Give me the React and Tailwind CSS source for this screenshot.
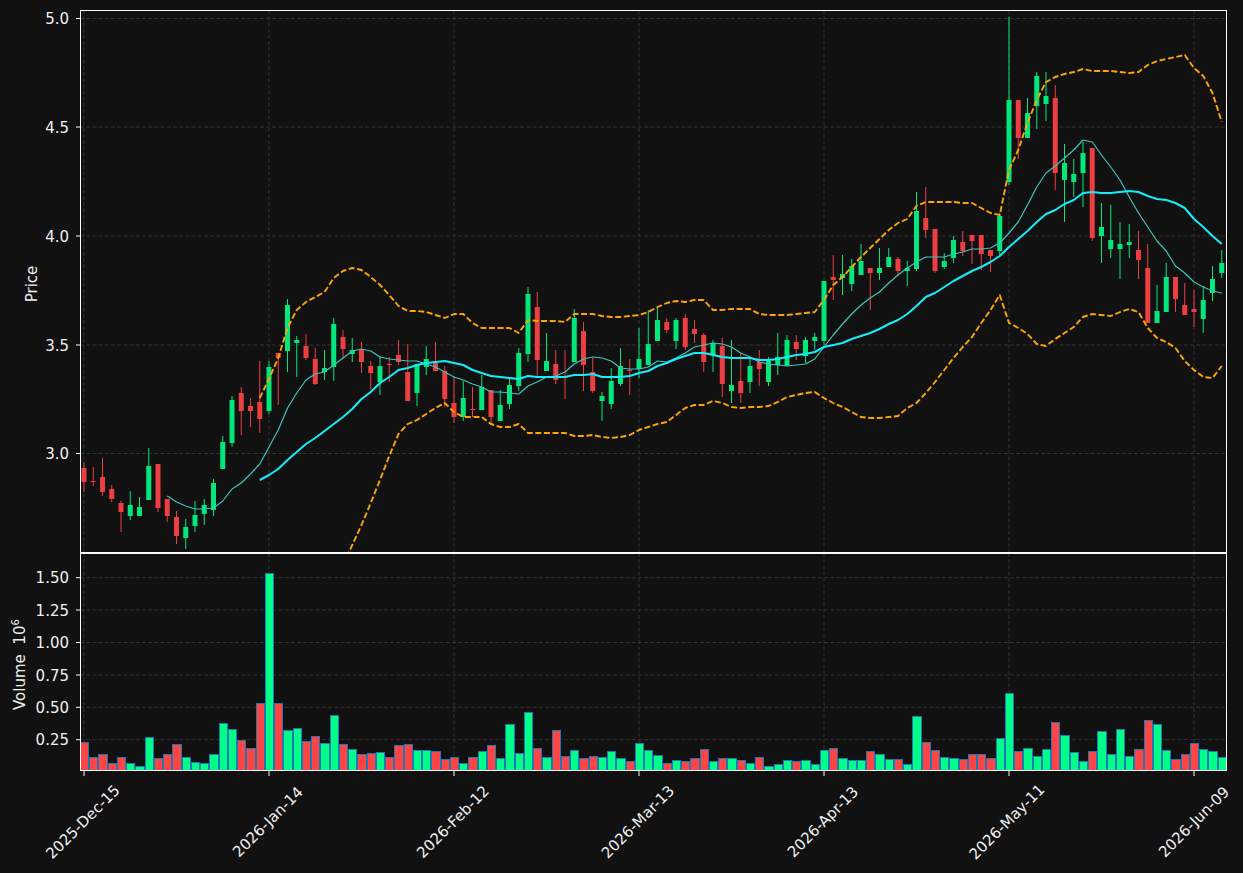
const C = [
[0,462,468,482,492],[0,467,481,482,486],[0,458,477,492,496],[0,485,489,499,502],[0,501,503,512,532],
[1,491,505,516,520],[1,497,507,516,516],[1,448,466,500,500],[0,464,464,508,512],[0,499,499,516,522],
[0,511,517,536,544],[1,519,527,538,549],[1,501,515,526,532],[1,499,505,514,525],[1,479,483,510,516],
[1,436,442,469,469],[1,396,400,443,447],[0,387,393,411,435],[0,398,406,411,427],[0,361,402,419,433],
[1,361,367,411,414],[0,353,353,358,405],[1,299,305,351,372],[1,336,340,343,377],[0,334,346,358,360],
[0,348,359,384,385],[1,350,368,372,380],[1,318,324,367,381],[0,330,337,349,358],[1,338,350,354,362],
[0,342,349,362,373],[0,361,366,373,390],[1,356,366,382,395],[0,357,364,365,382],[0,340,355,362,365],
[0,344,372,401,401],[1,364,364,393,406],[1,346,359,367,375],[0,342,363,371,371],[0,366,371,399,407],
[0,376,403,417,423],[1,381,398,417,421],[0,387,409,410,417],[1,375,387,410,410],[0,390,390,417,423],
[1,390,405,421,421],[1,378,385,404,409],[1,348,353,386,391],[1,287,294,354,362],[0,292,307,360,377],
[1,333,361,371,371],[0,350,364,380,384],[0,350,377,378,399],[1,309,318,362,362],[0,322,331,365,391],
[0,358,372,391,393],[1,392,396,401,421],[1,368,381,404,409],[1,348,366,384,386],[0,359,370,371,395],
[1,328,359,369,378],[1,310,344,365,365],[1,308,320,341,341],[0,318,322,330,333],[1,318,320,341,349],
[0,314,318,347,350],[0,320,329,334,343],[0,333,335,362,372],[1,340,343,355,372],[0,338,346,384,397],
[1,340,385,391,403],[0,353,381,393,403],[1,358,366,382,393],[0,350,362,369,386],[1,357,361,382,386],
[1,333,357,365,375],[1,335,340,366,366],[0,335,342,349,360],[1,337,340,356,363],[1,333,337,341,350],
[1,281,281,341,345],[0,255,277,280,300],[1,255,274,278,295],[1,259,266,284,291],[1,244,261,275,275],
[0,268,268,273,310],[1,248,268,273,280],[1,248,257,267,267],[0,257,259,271,276],[1,261,268,271,286],
[1,192,211,269,271],[0,187,218,230,238],[0,229,229,271,273],[1,253,261,267,269],[1,236,240,258,263],
[0,231,242,251,256],[0,235,235,241,264],[0,235,235,254,270],[0,250,250,256,272],[1,213,216,251,255],
[1,17,100,182,185],[0,100,100,138,159],[1,98,113,138,138],[1,72,76,106,129],[1,72,96,104,121],
[0,85,98,173,190],[1,144,163,180,222],[1,159,174,182,197],[1,142,153,173,207],[0,148,148,238,241],
[1,203,227,236,263],[1,205,240,249,258],[1,222,244,249,279],[1,224,242,245,258],[0,231,250,260,279],
[0,244,268,323,323],[1,285,311,323,323],[1,263,277,312,312],[0,277,277,299,312],[0,283,305,315,315],
[0,290,309,312,327],[1,286,300,319,333],[1,266,279,293,301],[1,250,263,273,278],
];

const V = [742,757,754,763,757,763,766,737,758,754,744,757,762,763,754,723,729,740,748,703,573,703,730,728,741,736,
743,715,744,749,754,753,752,757,745,744,750,750,751,759,757,763,757,751,745,758,724,753,712,748,757,730,756,750,758,756,757,751,758,761,743,
750,755,763,760,761,758,749,761,758,758,760,763,757,766,764,760,761,760,764,750,748,758,760,760,751,754,759,759,764,716,742,750,757,758,
759,754,754,758,738,693,751,748,756,749,722,735,752,761,751,731,754,729,756,749,720,724,750,759,754,743,749,751,757];

const THIN = [496,502,506,509,509,508,501,489,483,474,464,447,430,408,393,380,374,372,365,358,351,349,351,357,359,360,361,361,364,367,372,377,380,384,387,392,392,393,394,386,382,377,376,372,364,359,357,358,361,368,369,369,367,361,362,358,353,347,345,343,344,347,353,357,362,364,365,366,365,364,359,347,335,324,314,305,298,292,283,275,268,262,257,257,257,254,252,249,249,248,243,233,222,205,187,173,166,158,150,140,142,155,167,180,197,213,227,241,251,266,273,282,287,291,293];
const THICK = [480,475,469,460,452,444,438,431,424,417,409,399,392,383,377,370,368,365,363,362,361,363,365,370,373,376,377,378,379,376,377,377,377,377,375,375,374,377,377,377,376,373,371,366,363,359,356,353,353,355,357,358,358,358,360,360,359,357,355,354,352,347,345,343,339,336,333,329,324,320,314,306,297,293,287,281,276,271,267,262,256,247,239,231,222,214,210,204,200,193,192,193,193,192,191,192,196,199,200,203,208,219,227,236,244];
const UPPER = [398,379,358,328,310,302,297,292,278,271,268,270,277,285,295,306,311,311,312,315,318,314,314,323,328,328,328,328,333,320,321,321,321,322,314,314,314,316,317,317,316,315,312,307,303,301,302,300,300,310,310,309,309,309,314,315,315,315,314,313,312,300,285,277,267,257,248,239,230,223,219,206,202,202,202,202,203,203,208,213,215,170,150,123,100,82,77,74,72,69,71,71,71,72,73,72,65,61,59,57,55,68,76,93,122];
const LOWER = [565,545,525,503,480,456,434,424,420,414,408,403,412,417,417,417,424,427,427,424,433,433,433,433,433,436,436,435,437,438,437,435,430,427,424,422,415,408,405,405,401,403,407,408,407,407,406,402,397,395,393,392,398,403,407,412,417,418,418,417,416,408,403,393,382,370,358,347,337,323,310,295,323,328,334,344,346,339,333,327,317,314,315,316,312,309,312,328,338,342,348,361,370,377,378,366];

const GREEN = "#02e77c";
const RED = "#eb3f41";
const X = (i) => 84 + 9.25 * i;
const pts = (ys, start) => ys.map((y, k) => `${X(start + k)},${y}`).join(" ");
const TICKS = [0, 20, 40, 60, 80, 100, 120];
const PRICE_Y = [18.5, 127, 236, 345, 453.5];
const PRICE_L = ["5.0", "4.5", "4.0", "3.5", "3.0"];
const VOL_Y = [577.7, 610, 642.5, 675, 707.3, 739.7];
const VOL_L = ["1.50", "1.25", "1.00", "0.75", "0.50", "0.25"];
const DATES = [["2025-Dec-15", 83], ["2026-Jan-14", 268], ["2026-Feb-12", 453], ["2026-Mar-13", 638], ["2026-Apr-13", 823], ["2026-May-11", 1007], ["2026-Jun-09", 1194]];

function Grid({ ys, y1, y2 }) {
  return (
    <g stroke="#333333" strokeWidth="1" strokeDasharray="4 2.2" fill="none">
      {TICKS.map((t) => <line key={t} x1={X(t)} x2={X(t)} y1={y1} y2={y2} />)}
      {ys.map((y) => <line key={y} x1="80" x2="1227" y1={y} y2={y} />)}
    </g>
  );
}

function YAxis({ y0, h, ys, labels, children }) {
  return (
    <svg width="80" height={h} viewBox={`0 ${y0} 80 ${h}`} className="shrink-0 fill-[#f0f0f0] text-[15px]">
      {ys.map((y, k) => (
        <g key={y}>
          <line x1="76" x2="80" y1={y} y2={y} stroke="#fff" strokeWidth="1" />
          <text x="69" y={y + 5.5} textAnchor="end">{labels[k]}</text>
        </g>
      ))}
      {children}
    </svg>
  );
}

function VolBar({ i, top }) {
  const left = Math.round(X(i) - 4.2) + 0.5;
  const right = Math.round(X(i) + 4.2) + 0.5;
  return (
    <rect x={left} y={top + 0.5} width={right - left} height={772 - top}
      fill={C[i][0] ? "#00ff88" : "#ff4444"} stroke="#1f77b4" strokeWidth="1" shapeRendering="crispEdges" />
  );
}

export default function App() {
  return (
    <div className="w-[1243px] h-[873px] overflow-hidden bg-[#111111] pt-[10px] text-white font-['DejaVu_Sans',sans-serif]">
      <div className="flex h-[543px]">
        <YAxis y0={10} h={543} ys={PRICE_Y} labels={PRICE_L}>
          <text transform="rotate(-90 37 284)" x="37" y="284" textAnchor="middle">Price</text>
        </YAxis>
        <div className="w-[1147px] h-[543px] border border-white">
          <svg width="1145" height="541" viewBox="81 11 1145 541" className="block">
            <Grid ys={PRICE_Y} y1={10} y2={553} />
            {C.map(([g, wt, bt, bb, wb], i) => (
              <g key={i} fill={g ? GREEN : RED} stroke="none">
                <rect x={X(i) - 0.5} y={wt} width="1" height={wb - wt} />
                <rect x={X(i) - 2.5} y={bt} width="5" height={bb - bt} />
              </g>
            ))}
            <g fill="none" strokeLinejoin="round">
              <polyline points={pts(UPPER, 19)} stroke="#ffa500" strokeWidth="1.9" strokeDasharray="6 2.6" />
              <polyline points={pts(LOWER, 28)} stroke="#ffa500" strokeWidth="1.9" strokeDasharray="6 2.6" />
              <polyline points={pts(THIN, 9)} stroke="#3fc4bd" strokeWidth="1.2" />
              <polyline points={pts(THICK, 19)} stroke="#14eefa" strokeWidth="2" />
            </g>
          </svg>
        </div>
      </div>
      <div className="flex h-[218px]">
        <YAxis y0={553} h={218} ys={VOL_Y} labels={VOL_L}>
          <text transform="rotate(-90 25 710)" x="25" y="710">
            Volume{"\u00A0\u00A0"}10<tspan dy="-6" className="text-[10px]">6</tspan>
          </text>
        </YAxis>
        <div className="w-[1147px] h-[218px] border border-white">
          <svg width="1145" height="216" viewBox="81 554 1145 216" className="block">
            <Grid ys={VOL_Y} y1={553} y2={771} />
            {V.map((top, i) => <VolBar key={i} i={i} top={top} />)}
          </svg>
        </div>
      </div>
      <svg width="1243" height="102" viewBox="0 771 1243 102" className="block fill-[#f0f0f0] text-[15px]">
        {TICKS.map((t) => <line key={t} x1={X(t)} x2={X(t)} y1="771" y2="776" stroke="#fff" strokeWidth="1" />)}
        {DATES.map(([label, x]) => (
          <text key={label} transform={`rotate(-45 ${x} 822)`} x={x} y="827" textAnchor="middle">{label}</text>
        ))}
      </svg>
    </div>
  );
}
